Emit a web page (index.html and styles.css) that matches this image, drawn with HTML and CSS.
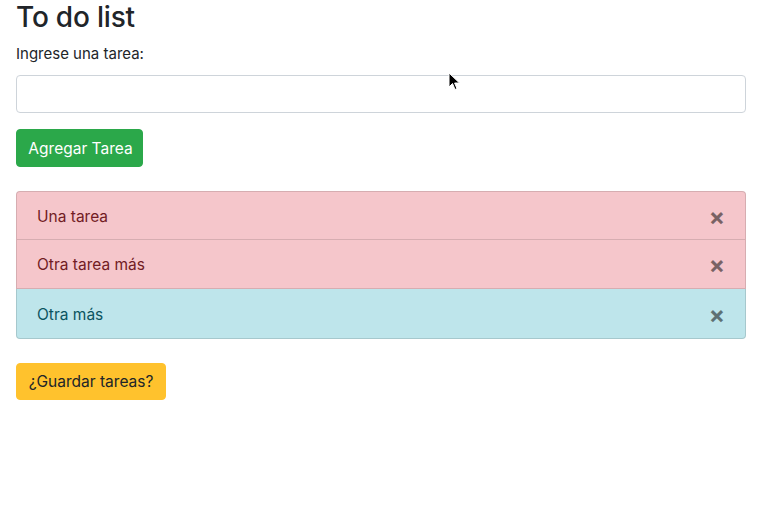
FILE: index.html
```html
<!DOCTYPE html>
<html lang="es">
<head>
<meta charset="utf-8">
<title>To do list</title>
<link rel="stylesheet" href="styles.css">
</head>
<body>
<div class="container">
  <h2 class="title">To do list</h2>
  <label class="label" for="tarea">Ingrese una tarea:</label>
  <input class="input" id="tarea" type="text">
  <button class="btn btn-success">Agregar Tarea</button>
  <ul class="list">
    <li class="item item-danger"><span>Una tarea</span><span class="close">&times;</span></li>
    <li class="item item-danger"><span>Otra tarea más</span><span class="close">&times;</span></li>
    <li class="item item-info"><span>Otra más</span><span class="close">&times;</span></li>
  </ul>
  <button class="btn btn-warning">¿Guardar tareas?</button>
</div>
<svg class="cursor" width="14" height="20" viewBox="0 0 14 20"><path d="M1 1 L1 15 L4.5 11.5 L7 17.5 L9 16.6 L6.6 11 L11.5 11 Z" fill="#000" stroke="#fff" stroke-width="1"/></svg>
</body>
</html>
```
FILE: styles.css
```css
html, body { margin: 0; padding: 0; background: #fff; }
body {
  font-family: Inter, "Noto Sans", sans-serif;
  font-size: 16px;
  line-height: 24px;
  color: #212529;
}
.container { padding: 0 16px; width: 730px; }
.title {
  margin: 0 0 8px;
  font-size: 28px;
  font-weight: 500;
  line-height: 34px;
  letter-spacing: -0.2px;
}
.label { display: block; margin-bottom: 9px; font-size: 15px; }
.input {
  display: block;
  box-sizing: border-box;
  width: 100%;
  height: 38px;
  margin: 0 0 16px;
  border: 1px solid #ced4da;
  border-radius: 4px;
  padding: 6px 12px;
  font: inherit;
}
.btn {
  display: block;
  box-sizing: border-box;
  height: 38px;
  border: 1px solid transparent;
  border-radius: 4px;
  font-family: inherit;
  font-size: 15.5px;
  line-height: 24px;
  white-space: nowrap;
  cursor: pointer;
  text-align: center;
}
.btn-success { background: #2ba84a; border-color: #2ba84a; color: #fff; width: 127px; padding: 7px 0 5px 2px; }
.btn-warning { background: #ffc22d; border-color: #ffc22d; color: #212529; width: 150px; height: 37px; padding: 6px 0 5px; }
.list {
  list-style: none;
  margin: 24px 0 24px;
  padding: 0;
}
.item {
  display: flex;
  justify-content: space-between;
  align-items: center;
  height: 49px;
  box-sizing: border-box;
  padding: 2px 20px 0;
  border: 1px solid rgba(0,0,0,.125);
  border-top-width: 0;
  font-size: 15.5px;
}
.item:first-child { border-top-width: 1px; border-radius: 4px 4px 0 0; height: 49px; }
.item:last-child { border-radius: 0 0 4px 4px; height: 50px; }
.item-danger { background: #f5c6cb; color: #721c24; }
.item-info { background: #bee5eb; color: #0c5460; }
.close {
  font-size: 24px;
  font-weight: 700;
  color: #000;
  opacity: .5;
  line-height: 1;
  margin-top: 0;
  margin-right: 0;
}
.cursor { position: absolute; left: 448px; top: 72px; }
```
